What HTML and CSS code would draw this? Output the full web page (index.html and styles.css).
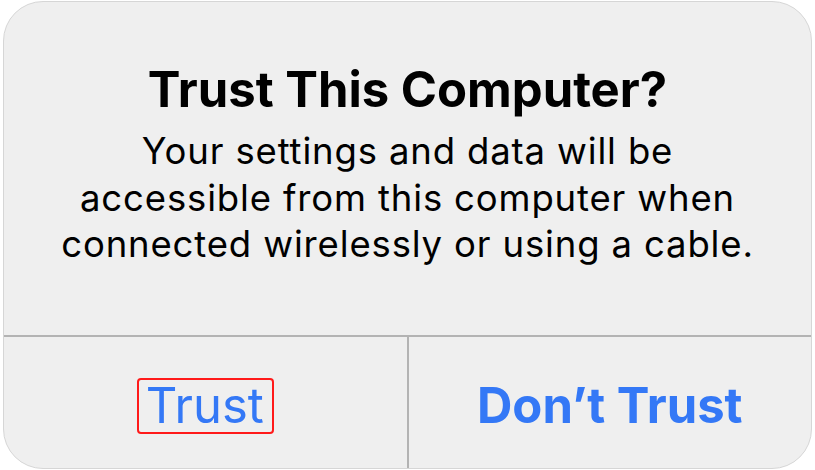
FILE: index.html
```html
<!DOCTYPE html>
<html lang="en">
<head>
  <meta charset="UTF-8" />
  <meta name="viewport" content="width=device-width, initial-scale=1.0" />
  <title>Trust This Computer?</title>
  <link rel="stylesheet" href="styles.css">
</head>
<body>
  <div class="alert">
    <div class="alert-body">
      <h1>Trust This Computer?</h1>
      <p>Your settings and data will be<br>accessible from this computer when<br>connected wirelessly or using a cable.</p>
    </div>
    <div class="alert-actions">
      <button class="action"><span class="highlight">Trust</span></button>
      <button class="action action-bold">Don’t Trust</button>
    </div>
  </div>
</body>
</html>
```
FILE: styles.css
```css
body {
  margin: 0;
  background-color: #fff;
  font-family: Inter, "Noto Sans", sans-serif;
}

.alert {
  margin: 1px 0 0 3px;
  width: 807px;
  height: 466px;
  border: 1px solid #d6d6d6;
  border-radius: 40px;
  background-color: #efefef;
  display: flex;
  flex-direction: column;
  overflow: hidden;
}

.alert-body {
  height: 335px;
  border-bottom: 2px solid #b3b3b3;
  text-align: center;
  box-sizing: border-box;
  padding-top: 58px;
}

h1 {
  margin: 0;
  font-size: 49px;
  font-weight: 700;
  line-height: 60px;
  color: #000;
}

p {
  margin: 8px 0 0;
  font-size: 36.5px;
  line-height: 46.5px;
  letter-spacing: 0.85px;
  color: #000;
}

.alert-actions {
  flex: 1;
  display: flex;
}

.action {
  flex: 1;
  border: none;
  background: none;
  font-family: inherit;
  font-size: 49px;
  color: #3478f6;
  padding: 6px 0 0;
}

.action + .action {
  border-left: 2px solid #b3b3b3;
}

.action-bold {
  font-weight: 700;
}

.highlight {
  display: inline-block;
  line-height: 52px;
  outline: 2px solid #ff1a1a;
  border-radius: 2px;
  padding: 0 8px 0 7px;
}
```
